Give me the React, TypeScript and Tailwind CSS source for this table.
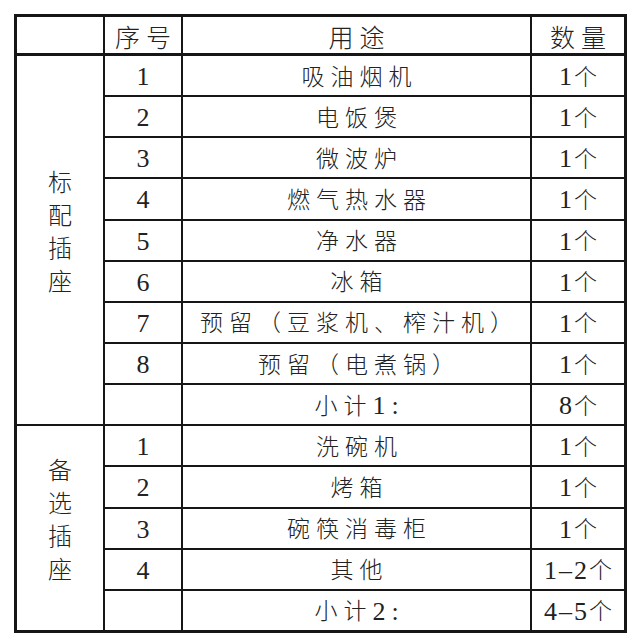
import React from "react";

const FONT = { fontFamily: '"Liberation Serif", "Noto Sans CJK SC", serif' };

type Row = { n: string; use: string; qty: string };

const group1: Row[] = [
  { n: "1", use: "吸油烟机", qty: "1个" },
  { n: "2", use: "电饭煲", qty: "1个" },
  { n: "3", use: "微波炉", qty: "1个" },
  { n: "4", use: "燃气热水器", qty: "1个" },
  { n: "5", use: "净水器", qty: "1个" },
  { n: "6", use: "冰箱", qty: "1个" },
  { n: "7", use: "预留（豆浆机、榨汁机）", qty: "1个" },
  { n: "8", use: "预留（电煮锅）", qty: "1个" },
  { n: "", use: "小计1:", qty: "8个" },
];

const group2: Row[] = [
  { n: "1", use: "洗碗机", qty: "1个" },
  { n: "2", use: "烤箱", qty: "1个" },
  { n: "3", use: "碗筷消毒柜", qty: "1个" },
  { n: "4", use: "其他", qty: "1–2个" },
  { n: "", use: "小计2:", qty: "4–5个" },
];

function Mixed({ text, tight }: { text: string; tight?: boolean }) {
  const parts = text.match(/[0-9\-–:]+|[^0-9\-–:]+/g) || [];
  return (
    <>
      {parts.map((p, i) =>
        /^[0-9\-–:]+$/.test(p) ? (
          <span
            key={i}
            className={`text-[26px] font-normal ${tight ? "tracking-[2px]" : ""}`}
            style={{ fontFamily: '"Liberation Serif", serif' }}
          >
            {p}
          </span>
        ) : (
          <span key={i} className="text-[23px] font-light">
            {p}
          </span>
        )
      )}
    </>
  );
}

function Label({ chars, span }: { chars: string; span: string }) {
  return (
    <div
      className={`${span} bg-white flex flex-col items-center justify-center pb-[14px] text-[24px] text-[#222] font-light`}
    >
      {chars.split("").map((c, i) => (
        <div key={i} className="leading-[33px]">
          {c}
        </div>
      ))}
    </div>
  );
}

function Cells({ r }: { r: Row }) {
  return (
    <>
      <div
        className="bg-white flex items-center justify-center pt-[3px] text-[26px] text-[#222] leading-none"
        style={{ fontFamily: '"Liberation Serif", serif' }}
      >
        {r.n}
      </div>
      <div className="bg-white flex items-center justify-center pt-[3px] pl-[6px] tracking-[6px] text-[#222] leading-none whitespace-nowrap">
        <Mixed text={r.use} />
      </div>
      <div className="bg-white flex items-center justify-center pt-[3px] text-[#222] leading-none whitespace-nowrap">
        <Mixed text={r.qty} tight />
      </div>
    </>
  );
}

export default function App() {
  return (
    <div className="w-[640px] h-[638px] bg-white pt-[14px] pl-[14px]" style={FONT}>
      <div className="w-[613px] h-[619px] bg-[#161616] p-[3px] grid grid-cols-[86px_76px_347px_92px] grid-rows-[37px_repeat(14,1fr)] gap-[2px]">
        <div className="bg-white border-b border-[#161616]" />
        <div className="bg-white border-b border-[#161616] flex items-center justify-center pt-[6px] pl-[6px] tracking-[6px] text-[25px] text-[#222] font-light leading-none">
          序号
        </div>
        <div className="bg-white border-b border-[#161616] flex items-center justify-center pt-[6px] pl-[6px] tracking-[6px] text-[25px] text-[#222] font-light leading-none">
          用途
        </div>
        <div className="bg-white border-b border-[#161616] flex items-center justify-center pt-[6px] pl-[6px] tracking-[6px] text-[25px] text-[#222] font-light leading-none">
          数量
        </div>

        <Label chars="标配插座" span="row-span-9" />
        {group1.map((r, i) => (
          <Cells key={"a" + i} r={r} />
        ))}

        <Label chars="备选插座" span="row-span-5" />
        {group2.map((r, i) => (
          <Cells key={"b" + i} r={r} />
        ))}
      </div>
    </div>
  );
}
